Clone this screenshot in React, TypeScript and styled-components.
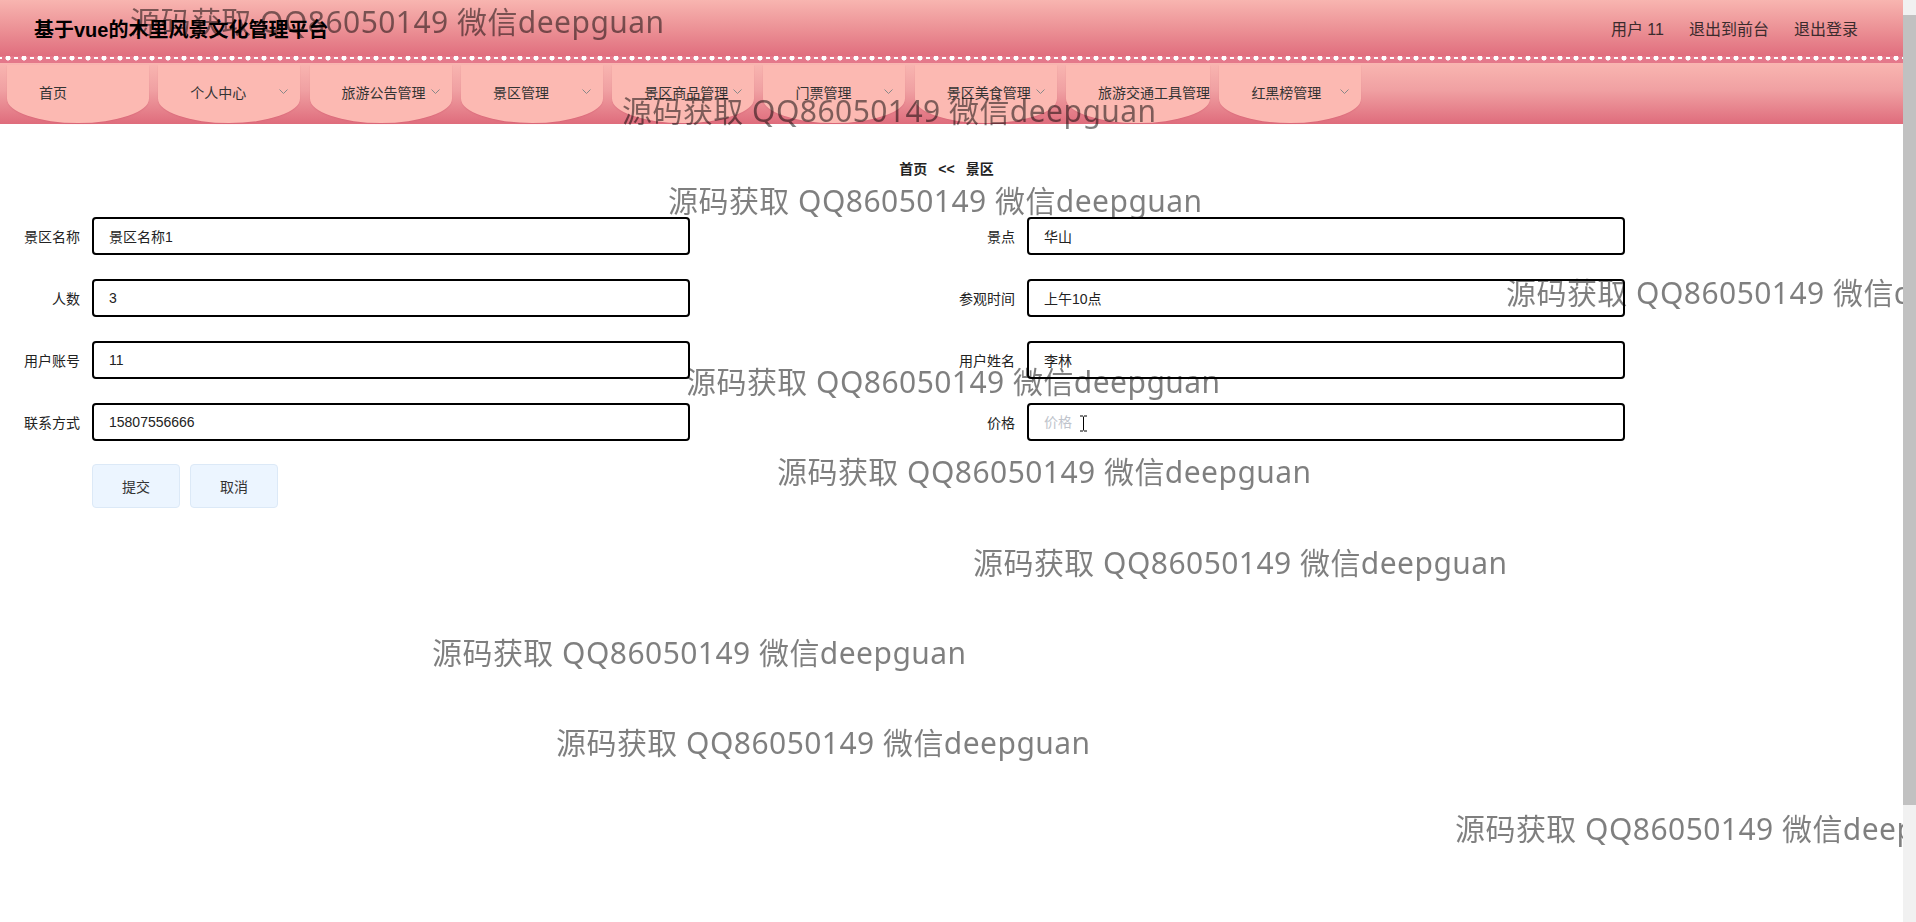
import React from "react";
import styled, { createGlobalStyle } from "styled-components";

const GlobalStyle = createGlobalStyle`
  html, body { margin: 0; padding: 0; background: #fff; overflow: hidden; }
  body {
    font-family: "Liberation Sans", "Noto Sans CJK SC", sans-serif;
    color: #333;
  }
`;

const Viewport = styled.div`
  display: flex;
  height: 100vh;
`;

const Page = styled.div`
  position: relative;
  flex: 1;
  min-width: 0;
  overflow: hidden;
`;

const ScrollRail = styled.div`
  flex: 0 0 13px;
  background: #f1f1f1;
  padding-top: 15px;
  box-sizing: border-box;
`;

const ScrollThumb = styled.div`
  height: 790px;
  background: #c1c1c1;
`;

const TopBar = styled.header`
  height: 56px;
  display: flex;
  align-items: center;
  justify-content: space-between;
  padding: 0 45px 0 34px;
  background: linear-gradient(180deg, #f8b5b0 0%, #eb8f94 55%, #e06e7e 100%);
`;

const Title = styled.h1`
  margin: 0;
  font-size: 20px;
  font-weight: bold;
  color: #000;
`;

const UserMenu = styled.div`
  display: flex;
  gap: 25px;
  font-size: 16px;
  color: #3b2b2d;
`;

const UserLink = styled.span`
  cursor: pointer;
`;

const Scallop = styled.div`
  height: 7px;
  background-color: #e4788a;
  background-image:
    radial-gradient(circle at 8px 2px, #fff 0 2.3px, transparent 2.8px),
    linear-gradient(90deg, #fff 0 2px, transparent 2px 14px, #fff 14px 16px);
  background-size: 16px 7px, 16px 2px;
  background-position: 0 0, 0 1px;
  background-repeat: repeat-x, repeat-x;
`;

const NavBar = styled.nav`
  height: 61px;
  display: flex;
  gap: 9.3px;
  padding-left: 7px;
  background: linear-gradient(180deg, #f9b6b1 0%, #f0a0a2 45%, #df6c7c 100%);
`;

const Tab = styled.div`
  position: relative;
  flex: 0 0 142px;
  height: 58px;
  margin-top: 2px;
  box-sizing: border-box;
  padding: 0 0 5px 32px;
  display: flex;
  align-items: center;
  background: #fcb9b2;
  border-radius: 0 0 50% 50% / 0 0 42% 42%;
  box-shadow: 0 1px 1px rgba(210, 90, 110, 0.35);
  font-size: 14px;
  color: #333;
  white-space: nowrap;
`;

const Arrow = styled.svg`
  position: absolute;
  right: 12px;
  top: 24px;
`;

const Main = styled.main`
  padding-top: 35px;
`;

const Crumb = styled.div`
  display: flex;
  justify-content: center;
  gap: 11px;
  padding-right: 10px;
  font-size: 14px;
  font-weight: bold;
  line-height: 20px;
  color: #222;
`;

const Form = styled.form`
  display: grid;
  grid-template-columns: 935px 935px;
  row-gap: 24px;
  margin-top: 38px;
`;

const Item = styled.div`
  display: flex;
  align-items: center;
  height: 38px;
`;

const Label = styled.label`
  width: 80px;
  padding-right: 12px;
  text-align: right;
  font-size: 14px;
  color: #222;
  white-space: nowrap;
`;

const Input = styled.input`
  width: 598px;
  height: 38px;
  box-sizing: border-box;
  border: 2px solid #000;
  border-radius: 4px;
  padding: 0 15px;
  font-family: "Liberation Sans", "Noto Sans CJK SC", sans-serif;
  font-size: 14px;
  color: #222;
  outline: none;
  background: #fff;
  &::placeholder { color: #c0c4cc; }
`;

const Actions = styled.div`
  grid-column: 1 / -1;
  display: flex;
  gap: 10px;
  padding-left: 92px;
  margin-top: -1px;
`;

const Button = styled.button`
  width: 88px;
  height: 44px;
  background: #ecf5ff;
  border: 1px solid #dce9f7;
  border-radius: 4px;
  font-family: "Liberation Sans", "Noto Sans CJK SC", sans-serif;
  font-size: 14px;
  color: #333;
  cursor: pointer;
`;

const Watermarks = styled.div`
  position: absolute;
  inset: 0;
  pointer-events: none;
  z-index: 10;
`;

const Mark = styled.span<{ $x: number; $y: number }>`
  position: absolute;
  left: ${(p) => p.$x}px;
  top: ${(p) => p.$y}px;
  transform: translateY(-50%);
  font-family: "Noto Sans", "Noto Sans CJK SC", sans-serif;
  font-size: 30px;
  line-height: 30px;
  letter-spacing: 0.45px;
  color: rgba(0, 0, 0, 0.5);
  white-space: nowrap;
`;

const Cursor = styled.svg`
  position: absolute;
  left: 1079px;
  top: 415px;
  z-index: 11;
`;

const tabs: { name: string; arrow: boolean }[] = [
  { name: "首页", arrow: false },
  { name: "个人中心", arrow: true },
  { name: "旅游公告管理", arrow: true },
  { name: "景区管理", arrow: true },
  { name: "景区商品管理", arrow: true },
  { name: "门票管理", arrow: true },
  { name: "景区美食管理", arrow: true },
  { name: "旅游交通工具管理", arrow: false },
  { name: "红黑榜管理", arrow: true },
];

const fields: { label: string; value: string; placeholder?: string; focus?: boolean }[] = [
  { label: "景区名称", value: "景区名称1" },
  { label: "景点", value: "华山" },
  { label: "人数", value: "3" },
  { label: "参观时间", value: "上午10点" },
  { label: "用户账号", value: "11" },
  { label: "用户姓名", value: "李林" },
  { label: "联系方式", value: "15807556666" },
  { label: "价格", value: "", placeholder: "价格", focus: true },
];

const marks: [number, number][] = [
  [130, 22],
  [622, 111],
  [668, 201],
  [1506, 293],
  [686, 382],
  [777, 472],
  [973, 563],
  [432, 653],
  [556, 743],
  [1455, 829],
];

export default function App() {
  return (
    <Viewport>
      <GlobalStyle />
      <Page>
        <TopBar>
          <Title>基于vue的木里风景文化管理平台</Title>
          <UserMenu>
            <UserLink>用户 11</UserLink>
            <UserLink>退出到前台</UserLink>
            <UserLink>退出登录</UserLink>
          </UserMenu>
        </TopBar>
        <Scallop />
        <NavBar>
          {tabs.map((t) => (
            <Tab key={t.name}>
              {t.name}
              {t.arrow && (
                <Arrow width="9" height="6" viewBox="0 0 9 6">
                  <polyline points="0.5,0.5 4.5,4.5 8.5,0.5" fill="none" stroke="#888" strokeWidth="1" />
                </Arrow>
              )}
            </Tab>
          ))}
        </NavBar>
        <Main>
          <Crumb>
            <span>首页</span>
            <span>&lt;&lt;</span>
            <span>景区</span>
          </Crumb>
          <Form onSubmit={(e) => e.preventDefault()}>
            {fields.map((f) => (
              <Item key={f.label}>
                <Label>{f.label}</Label>
                <Input defaultValue={f.value} placeholder={f.placeholder} autoFocus={f.focus} />
              </Item>
            ))}
            <Actions>
              <Button type="submit">提交</Button>
              <Button type="button">取消</Button>
            </Actions>
          </Form>
        </Main>
        <Watermarks>
          {marks.map(([x, y], i) => (
            <Mark key={i} $x={x} $y={y}>
              源码获取 QQ86050149 微信deepguan
            </Mark>
          ))}
        </Watermarks>
        <Cursor width="9" height="17" viewBox="0 0 9 17">
          <path d="M1 1h3M5 1h3M4.5 1.5v14M1 16h3M5 16h3" stroke="#000" strokeWidth="1" fill="none" />
        </Cursor>
      </Page>
      <ScrollRail>
        <ScrollThumb />
      </ScrollRail>
    </Viewport>
  );
}
